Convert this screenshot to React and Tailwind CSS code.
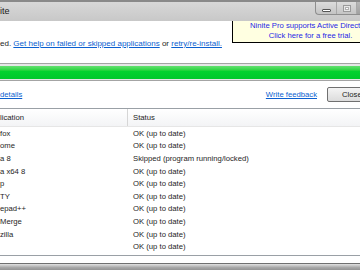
const rows = [
  ["fox", "OK (up to date)"],
  ["ome", "OK (up to date)"],
  ["a 8", "Skipped (program running/locked)"],
  ["a x64 8", "OK (up to date)"],
  ["p", "OK (up to date)"],
  ["TY", "OK (up to date)"],
  ["epad++", "OK (up to date)"],
  ["Merge", "OK (up to date)"],
  ["zilla", "OK (up to date)"],
  ["", "OK (up to date)"],
];

function WindowButtons() {
  return (
    <div className="ml-auto mr-[-9px] flex h-[13px] border-l border-b border-[#8e8e8e] rounded-bl-[4px] bg-gradient-to-b from-[#dcdcdc] to-[#c4c4c4]">
      {/* minimize */}
      <div className="flex w-[21px] items-end justify-center pb-[2px] border-r border-[#a8a8a8]">
        <div className="h-[3px] w-[9px] rounded-[1px] border border-[#555] bg-white" />
      </div>
      {/* maximize */}
      <div className="flex w-[20px] items-center justify-center border-r border-[#a8a8a8]">
        <div className="h-[7px] w-[8px] border border-[#9a9a9a] bg-[#e6e6e6] p-[1px]">
          <div className="h-full w-full border border-[#b0b0b0] bg-white" />
        </div>
      </div>
      {/* close */}
      <div className="w-[12px] bg-gradient-to-b from-[#b8b8b8] to-[#a0a0a0]" />
    </div>
  );
}

export default function App() {
  return (
    <div
      className="relative h-[270px] w-[360px] overflow-hidden bg-white text-[#1e1e1e]"
      style={{ fontFamily: '"Liberation Sans", Arial, sans-serif' }}
    >
      {/* Title bar */}
      <div className="flex h-[21px] border-t-2 border-[#8a8a8a] bg-gradient-to-b from-[#d8d8d8] to-[#c8c8c8]">
        <span className="pt-[4px] text-[9px] leading-[10px] text-[#202020]">ite</span>
        <WindowButtons />
      </div>

      {/* Message + ad */}
      <div className="flex h-[40px]">
        <div className="w-[232px] shrink-0 whitespace-nowrap pt-[18px] text-[8px] leading-[10px]">
          ed.{" "}
          <a className="text-[#0b5fd0] underline">Get help on failed or skipped applications</a>
          {" "}or{" "}
          <a className="text-[#0b5fd0] underline">retry/re-install.</a>
        </div>
        <div className="h-[22px] w-[156px] shrink-0 border-b border-l border-black bg-[#ffffe1] text-center text-[7.7px] leading-[10px] text-[#1f1fe6]">
          <div className="whitespace-nowrap">Ninite Pro supports Active Directory</div>
          <div className="whitespace-nowrap">Click here for a free trial.</div>
        </div>
      </div>

      {/* Progress bar */}
      <div className="mt-[2px] border-y border-[#a4a4a4] bg-[#e6e6e6] pt-[2px] pb-[1px]">
        <div className="h-[13px] bg-gradient-to-b from-[#62e070] via-[#03d22f] via-40% to-[#00c82b]" />
      </div>

      {/* Links + button */}
      <div className="flex h-[27px] items-center text-[7.7px]">
        <a className="text-[#0b5fd0] underline">details</a>
        <a className="ml-auto text-[#0b5fd0] underline">Write feedback</a>
        <button className="ml-[10px] mr-[-12px] h-[15px] w-[45px] rounded-[2px] border border-[#707070] bg-gradient-to-b from-[#f4f4f4] to-[#dcdcdc] pl-[3px] text-left text-[7.7px] text-[#1e1e1e]">
          <span className="pl-[11px]">Close</span>
        </button>
      </div>

      {/* List */}
      <div className="border-y border-[#9aa0a6] pb-[1px] text-[7.7px]">
        <div className="flex h-[18px] items-center border-b border-[#e6e6e6] bg-gradient-to-b from-white to-[#f3f4f6]">
          <div className="flex h-full w-[128px] items-center border-r border-[#d6d6d6]">lication</div>
          <div className="pl-[5px]">Status</div>
        </div>
        {rows.map(([name, status], i) => (
          <div key={i} className="flex h-[12.67px] items-center">
            <div className="w-[128px] shrink-0">{name}</div>
            <div className="pl-[5px] whitespace-nowrap">{status}</div>
          </div>
        ))}
      </div>

      {/* Window bottom frame */}
      <div className="mt-[7px] h-[8px] border-t border-[#707070] bg-gradient-to-b from-[#e2e2e2] via-[#a8a8a8] to-[#8c8c8c]" />
    </div>
  );
}
